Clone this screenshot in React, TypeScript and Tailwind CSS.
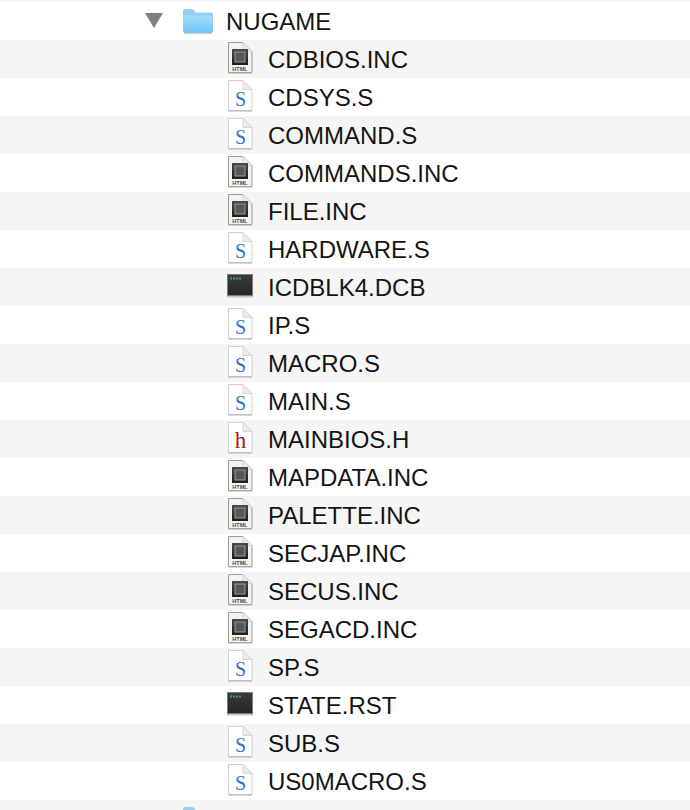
import React from "react";

type Kind = "html" | "s" | "h" | "term";

const rows: [string, Kind][] = [
  ["CDBIOS.INC", "html"],
  ["CDSYS.S", "s"],
  ["COMMAND.S", "s"],
  ["COMMANDS.INC", "html"],
  ["FILE.INC", "html"],
  ["HARDWARE.S", "s"],
  ["ICDBLK4.DCB", "term"],
  ["IP.S", "s"],
  ["MACRO.S", "s"],
  ["MAIN.S", "s"],
  ["MAINBIOS.H", "h"],
  ["MAPDATA.INC", "html"],
  ["PALETTE.INC", "html"],
  ["SECJAP.INC", "html"],
  ["SECUS.INC", "html"],
  ["SEGACD.INC", "html"],
  ["SP.S", "s"],
  ["STATE.RST", "term"],
  ["SUB.S", "s"],
  ["US0MACRO.S", "s"],
];

function Page({ children, edge = "#d0d0d0", fill = "#fff" }: { children?: React.ReactNode; edge?: string; fill?: string }) {
  return (
    <svg width="26" height="32" viewBox="0 0 26 32" className="mb-[2px] ml-[2px] block">
      <path d="M0.5 0.5H15L24 9.5V30.5H0.5Z" fill={fill} stroke={edge} strokeWidth="1" />
      <path d="M0.5 31H24" stroke="#b0b0b0" strokeWidth="1" />
      <path d="M15 0.5V9.5H24Z" fill="#ececec" stroke="#d6d6d6" strokeWidth="1" />
      {children}
    </svg>
  );
}

function FileIcon({ kind }: { kind: Kind }) {
  if (kind === "term") {
    return (
      <svg width="28" height="24" viewBox="0 0 28 24" className="mb-[2px] block">
        <defs>
          <linearGradient id="term" x1="0" y1="0" x2="0" y2="1">
            <stop offset="0" stopColor="#3a3a3a" />
            <stop offset="1" stopColor="#262626" />
          </linearGradient>
        </defs>
        <rect x="1.5" y="0.5" width="25" height="21" fill="url(#term)" stroke="#7d7d7d" strokeWidth="1" />
        <rect x="1" y="22" width="26" height="1.5" fill="#c4c4c4" />
        <path d="M4 4.5H15" stroke="#3aa757" strokeWidth="2" strokeDasharray="2 1" />
      </svg>
    );
  }
  if (kind === "html") {
    return (
      <Page edge="#9a9a9a" fill="#f3f3f3">
        <defs>
          <linearGradient id="dark" x1="0" y1="0" x2="0" y2="1">
            <stop offset="0" stopColor="#4a4a4a" />
            <stop offset="1" stopColor="#1d1d1d" />
          </linearGradient>
        </defs>
        <rect x="4" y="7" width="16" height="16" fill="url(#dark)" />
        <rect x="7" y="10" width="10" height="10" fill="#565656" stroke="#9c9c9c" strokeWidth="1" />
        <text x="12" y="29" textAnchor="middle" fontSize="5.5" fontWeight="700" fontFamily="'Liberation Sans', sans-serif" fill="#4a4a4a">
          HTML
        </text>
      </Page>
    );
  }
  if (kind === "h") {
    return (
      <Page>
        <text x="12.5" y="26" textAnchor="middle" fontSize="23" fontFamily="'Liberation Serif', serif" fill="#a3122f">
          h
        </text>
      </Page>
    );
  }
  return (
    <Page>
      <text x="12.5" y="26" textAnchor="middle" fontSize="20" fontFamily="'Liberation Serif', serif" fill="#2f6fce">
        S
      </text>
    </Page>
  );
}

function Folder() {
  return (
    <svg width="32" height="26" viewBox="0 0 32 26" className="block">
      <defs>
        <linearGradient id="fld" x1="0" y1="0" x2="0" y2="1">
          <stop offset="0" stopColor="#a5dcfb" />
          <stop offset="1" stopColor="#71c5f8" />
        </linearGradient>
      </defs>
      <path d="M0 4Q0 1 2 1H9Q11 1 12 3.5L12.5 4.5H28Q30 4.5 30 6.5V23Q30 24.5 28 24.5H2Q0 24.5 0 23Z" fill="#8fd2f9" />
      <path d="M0 7.5H30V23Q30 24.5 28 24.5H2Q0 24.5 0 23Z" fill="url(#fld)" />
      <path d="M1 25H29" stroke="#8aa9bf" strokeWidth="1" />
    </svg>
  );
}

export default function App() {
  return (
    <div className="h-[810px] w-[690px] overflow-hidden bg-[#f5f5f5] pt-[2px] font-['Liberation_Sans',sans-serif] text-[24px] text-[#141414]">
      <div className="flex h-[38px] items-center bg-white">
        <svg width="18" height="16" viewBox="0 0 18 16" className="ml-[145px] block">
          <path d="M0 0H18L9 15Z" fill="#808080" />
        </svg>
        <div className="ml-[20px]">
          <Folder />
        </div>
        <span className="ml-[11px] pt-[2px]">NUGAME</span>
      </div>
      {rows.map(([name, kind], i) => (
        <div key={name} className={`flex h-[38px] items-center ${i % 2 === 0 ? "bg-[#f5f5f5]" : "bg-white"}`}>
          <div className="ml-[226px] flex w-[28px] justify-center">
            <FileIcon kind={kind} />
          </div>
          <span className="ml-[14px] pt-[2px]">{name}</span>
        </div>
      ))}
      <div className="flex h-[38px] items-center bg-[#f5f5f5]">
        <div className="ml-[183px]">
          <Folder />
        </div>
      </div>
    </div>
  );
}
